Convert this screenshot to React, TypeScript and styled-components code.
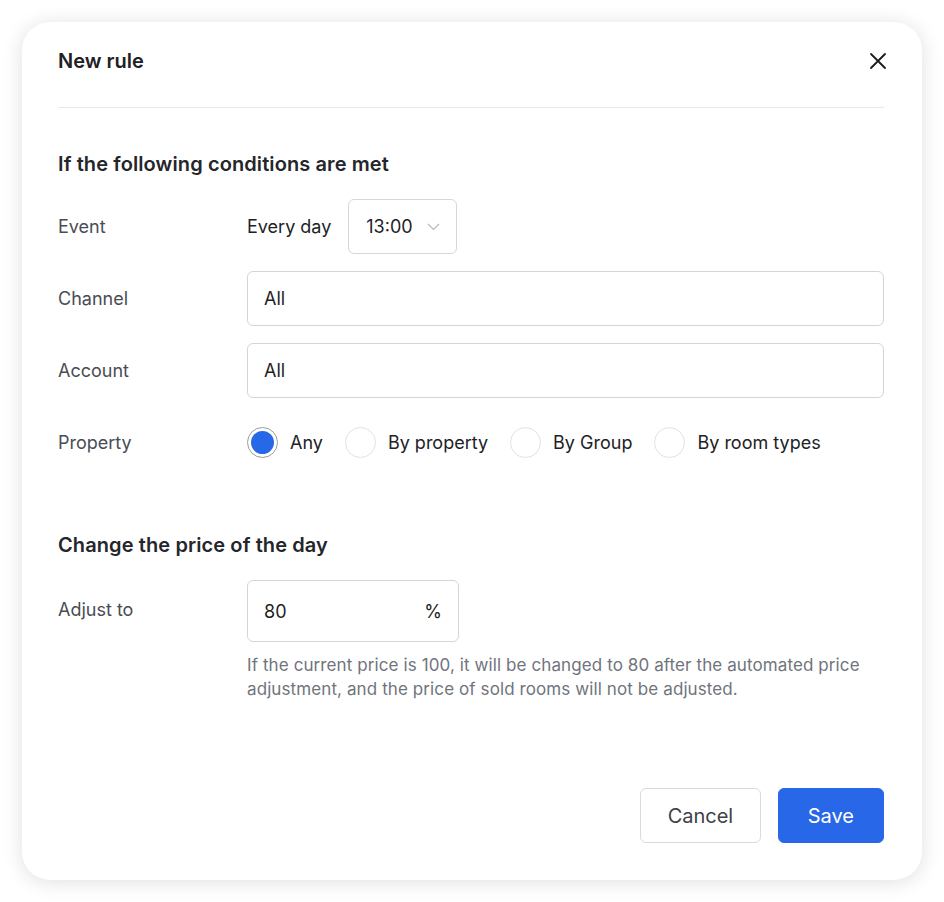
import React, { useState } from "react";
import styled, { createGlobalStyle } from "styled-components";

const Global = createGlobalStyle`
  html, body { margin: 0; padding: 0; background: #ffffff; }
  body { font-family: Inter, "Noto Sans", "Liberation Sans", sans-serif; -webkit-font-smoothing: antialiased; }
  * { box-sizing: border-box; }
`;

const Page = styled.div`
  padding: 22px;
  width: 944px;
  height: 902px;
`;

const Modal = styled.div`
  width: 900px;
  height: 858px;
  background: #fff;
  border-radius: 28px;
  box-shadow: 0 2px 20px rgba(0, 0, 0, 0.13);
  padding: 0 38px 37px 36px;
  display: flex;
  flex-direction: column;
`;

const Header = styled.div`
  display: flex;
  align-items: center;
  justify-content: space-between;
  padding: 25px 0 32px;
  border-bottom: 1px solid #e8e8ea;
`;

const Title = styled.h1`
  margin: 0;
  font-size: 20px;
  line-height: 28px;
  font-weight: 600;
  color: #1f2024;
`;

const CloseButton = styled.button`
  border: 0;
  background: none;
  padding: 0;
  margin-right: -4px;
  width: 20px;
  height: 20px;
  display: flex;
  align-items: center;
  justify-content: center;
  color: #1b1b1b;
  cursor: pointer;
`;

const Section = styled.section<{ $top: number }>`
  margin-top: ${(p) => p.$top}px;
  display: flex;
  flex-direction: column;
`;

const SectionTitle = styled.h2`
  margin: 0 0 21px;
  font-size: 20px;
  line-height: 28px;
  font-weight: 600;
  color: #25262b;
  letter-spacing: 0.1px;
`;

const Rows = styled.div`
  display: flex;
  flex-direction: column;
  gap: 17px;
`;

const Row = styled.div<{ $top?: boolean }>`
  display: grid;
  grid-template-columns: 189px 1fr;
  align-items: ${(p) => (p.$top ? "start" : "center")};
  min-height: 55px;
`;

const Label = styled.div<{ $pad?: number }>`
  font-size: 18px;
  line-height: 28px;
  color: #494c53;
  padding-top: ${(p) => p.$pad ?? 0}px;
`;

const Inline = styled.div`
  display: flex;
  align-items: center;
  gap: 17px;
`;

const Text = styled.span`
  font-size: 18px;
  color: #212226;
`;

const SelectBox = styled.div`
  width: 109px;
  height: 55px;
  border: 1px solid #d6d7da;
  border-radius: 6px;
  display: flex;
  align-items: center;
  justify-content: space-between;
  padding: 0 16px 0 17px;
  font-size: 18px;
  color: #212226;
`;

const Input = styled.div<{ $w?: number; $h?: number }>`
  width: ${(p) => (p.$w ? `${p.$w}px` : "100%")};
  height: ${(p) => p.$h ?? 55}px;
  border: 1px solid #d4d5d8;
  border-radius: 6px;
  display: flex;
  align-items: center;
  justify-content: space-between;
  padding: 0 16px;
  font-size: 18px;
  color: #1d1e22;
`;

const RadioGroup = styled.div`
  display: flex;
  align-items: center;
  gap: 22px;
`;

const RadioItem = styled.label`
  display: flex;
  align-items: center;
  gap: 12px;
  font-size: 18px;
  color: #212226;
  cursor: pointer;
`;

const RadioCircle = styled.span<{ $on: boolean }>`
  width: 31px;
  height: 31px;
  border-radius: 50%;
  border: 1px solid ${(p) => (p.$on ? "#9a9ca3" : "#e1e2e6")};
  display: flex;
  align-items: center;
  justify-content: center;
  &::after {
    content: "";
    width: 23px;
    height: 23px;
    border-radius: 50%;
    background: ${(p) => (p.$on ? "#2768e9" : "transparent")};
  }
`;

const Field = styled.div`
  display: flex;
  flex-direction: column;
`;

const Help = styled.p`
  margin: 11px 0 0;
  font-size: 17px;
  letter-spacing: 0.1px;
  line-height: 24px;
  color: #70747c;
`;

const Footer = styled.div`
  margin-top: auto;
  display: flex;
  justify-content: flex-end;
  gap: 17px;
`;

const Button = styled.button<{ $primary?: boolean }>`
  height: 55px;
  padding: 0 ${(p) => (p.$primary ? 29 : 26.5)}px;
  border-radius: 6px;
  font-family: inherit;
  font-size: 20px;
  border: 1px solid ${(p) => (p.$primary ? "#2767e8" : "#d8dae0")};
  background: ${(p) => (p.$primary ? "#2767e8" : "#fff")};
  color: ${(p) => (p.$primary ? "#fff" : "#3d4148")};
  cursor: pointer;
`;

const options = ["Any", "By property", "By Group", "By room types"];

export default function App() {
  const [sel, setSel] = useState("Any");
  return (
    <>
      <Global />
      <Page>
        <Modal>
          <Header>
            <Title>New rule</Title>
            <CloseButton aria-label="Close">
              <svg width="18" height="18" viewBox="0 0 18 18" fill="none">
                <path d="M2 2L16 16M16 2L2 16" stroke="currentColor" strokeWidth="1.8" strokeLinecap="round" />
              </svg>
            </CloseButton>
          </Header>

          <Section $top={42}>
            <SectionTitle>If the following conditions are met</SectionTitle>
            <Rows>
              <Row>
                <Label>Event</Label>
                <Inline>
                  <Text>Every day</Text>
                  <SelectBox>
                    <span>13:00</span>
                    <svg width="13" height="8" viewBox="0 0 13 8" fill="none">
                      <path d="M1 1L6.5 6.5L12 1" stroke="#b8bac0" strokeWidth="1.2" />
                    </svg>
                  </SelectBox>
                </Inline>
              </Row>
              <Row>
                <Label>Channel</Label>
                <Input>All</Input>
              </Row>
              <Row>
                <Label>Account</Label>
                <Input>All</Input>
              </Row>
              <Row>
                <Label>Property</Label>
                <RadioGroup>
                  {options.map((o) => (
                    <RadioItem key={o} onClick={() => setSel(o)}>
                      <RadioCircle $on={sel === o} />
                      {o}
                    </RadioItem>
                  ))}
                </RadioGroup>
              </Row>
            </Rows>
          </Section>

          <Section $top={61}>
            <SectionTitle>Change the price of the day</SectionTitle>
            <Row $top>
              <Label $pad={16}>Adjust to</Label>
              <Field>
                <Input $w={212} $h={62}>
                  <span>80</span>
                  <span>%</span>
                </Input>
                <Help>
                  If the current price is 100, it will be changed to 80 after the automated price
                  <br />
                  adjustment, and the price of sold rooms will not be adjusted.
                </Help>
              </Field>
            </Row>
          </Section>

          <Footer>
            <Button>Cancel</Button>
            <Button $primary>Save</Button>
          </Footer>
        </Modal>
      </Page>
    </>
  );
}
